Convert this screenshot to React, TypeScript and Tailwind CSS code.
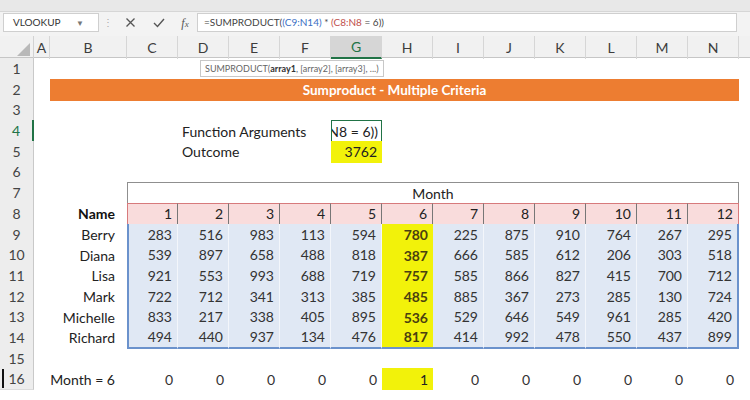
import React from 'react';

const COLS = ['A', 'B', 'C', 'D', 'E', 'F', 'G', 'H', 'I', 'J', 'K', 'L', 'M', 'N'];

const sales: [string, number[]][] = [
    ['Berry', [283, 516, 983, 113, 594, 780, 225, 875, 910, 764, 267, 295]],
    ['Diana', [539, 897, 658, 488, 818, 387, 666, 585, 612, 206, 303, 518]],
    ['Lisa', [921, 553, 993, 688, 719, 757, 585, 866, 827, 415, 700, 712]],
    ['Mark', [722, 712, 341, 313, 385, 485, 885, 367, 273, 285, 130, 724]],
    ['Michelle', [833, 217, 338, 405, 895, 536, 529, 646, 549, 961, 285, 420]],
    ['Richard', [494, 440, 937, 134, 476, 817, 414, 992, 478, 550, 437, 899]],
];

const months = Array.from({ length: 12 }, (_, i) => i + 1);
const pickedMonth = 6;

const gridCols = 'grid grid-cols-[34px_16px_77px_repeat(12,51px)]';

const RowNum = ({ n, active = false, cursor = false }: { n: number; active?: boolean; cursor?: boolean }) => (
    <div
        className={`relative h-full flex items-center justify-center bg-[#ededed] border-b border-[#dcdcdc] ${
            active ? 'text-[#217346] border-r-2 border-r-[#217346]' : 'text-[#444] border-r border-r-[#c9c9c9]'
        }`}
    >
        {cursor && <div className="absolute left-[2px] top-[1px] bottom-[1px] w-[2px] bg-[#111]"></div>}
        {n}
    </div>
);

const Cell = ({ children, className = '' }: { children?: React.ReactNode; className?: string }) => (
    <div className={`h-full flex items-center justify-end pr-[5px] overflow-hidden whitespace-nowrap ${className}`}>
        {children}
    </div>
);

const Row = ({ n, children, active, cursor }: { n: number; children?: React.ReactNode; active?: boolean; cursor?: boolean }) => (
    <div className={`${gridCols} h-[20.7px]`}>
        <RowNum n={n} active={active} cursor={cursor} />
        {children}
    </div>
);

export default function App() {
    return (
        <div className="w-[750px] h-[400px] bg-white overflow-hidden text-[14px] text-[#333]" style={{ fontFamily: 'Lato, "Open Sans", sans-serif' }}>
            {/* Formula bar */}
            <div className="h-[36px] bg-[#f3f3f3] flex flex-col">
                <div className="h-[12px] bg-[#e8e8e8] border-b border-[#d6d6d6]"></div>
                <div className="flex items-stretch h-[19px] mt-[1px] pr-[13px]">
                    <div className="w-[96px] ml-[3px] bg-white border border-[#cfcfcf] flex items-center justify-between px-[9px] text-[10px] text-[#333]">
                        <span>VLOOKUP</span>
                        <span className="text-[8px] text-[#777] mr-[5px]">▼</span>
                    </div>
                    <div className="w-[18px] flex items-center justify-center text-[10px] text-[#aaa]">⋮</div>
                    <div className="w-[80px] flex items-center justify-around text-[#555]">
                        <svg width="11" height="11" viewBox="0 0 11 11" fill="none" stroke="#555" strokeWidth="1.3">
                            <path d="M1.5 1.5l8 8M9.5 1.5l-8 8" />
                        </svg>
                        <svg width="12" height="11" viewBox="0 0 12 11" fill="none" stroke="#555" strokeWidth="1.4">
                            <path d="M1 6l3.5 3.5L11 2" />
                        </svg>
                        <span className="text-[12px] italic text-[#555]" style={{ fontFamily: '"Liberation Serif", serif' }}>
                            f<span className="text-[9px]">x</span>
                        </span>
                    </div>
                    <div className="flex-1 bg-white border border-[#cfcfcf] flex items-center pl-[6px] text-[10px] text-[#444]">
                        <span>=SUMPRODUCT(</span>
                        <span className="text-[#3b6fc4]">(C9:N14)</span>
                        <span className="whitespace-pre"> * </span>
                        <span className="text-[#c0504d]">(C8:N8</span>
                        <span className="whitespace-pre"> = 6))</span>
                    </div>
                </div>
            </div>

            {/* Column letters */}
            <div className={`${gridCols} h-[22px] bg-[#f1f1f1] border-b border-[#c6c6c6] text-[#3d3d3d]`}>
                <div className="relative border-r border-[#d2d2d2]">
                    <div className="absolute right-[3px] bottom-[3px] w-0 h-0 border-l-[13px] border-l-transparent border-b-[13px] border-b-[#b9b9b9]"></div>
                </div>
                {COLS.map((c) => (
                    <div
                        key={c}
                        className={`flex items-center justify-center border-r border-[#d6d6d6] ${
                            c === 'G' ? 'bg-[#d6d6d6] text-[#217346] border-b-2 border-b-[#217346]' : ''
                        }`}
                    >
                        {c}
                    </div>
                ))}
            </div>

            {/* Sheet body */}
            <div className="relative">
                <Row n={1} />
                <Row n={2}>
                    <div></div>
                    <div className="col-span-13 bg-[#ed7d31] text-white font-bold text-[13.5px] flex items-center justify-center">
                        Sumproduct - Multiple Criteria
                    </div>
                </Row>
                <Row n={3} />
                <Row n={4} active>
                    <div className="col-span-3"></div>
                    <div className="col-span-3 flex items-center pl-[4px] text-[#222]">Function Arguments</div>
                    <div className="border-[1.5px] border-[#217346] flex items-center justify-end overflow-hidden whitespace-nowrap pr-[3px] text-[#222]">
                        <span>N8 = 6))</span>
                    </div>
                </Row>
                <Row n={5}>
                    <div className="col-span-3"></div>
                    <div className="col-span-3 flex items-center pl-[4px] text-[#222]">Outcome</div>
                    <Cell className="bg-[#f2f20a] text-[#222]">3762</Cell>
                </Row>
                <Row n={6} />
                <Row n={7}>
                    <div className="col-span-2"></div>
                    <div className="col-span-12 border-t border-x border-[#8f8f8f] flex items-center justify-center text-[#222]">
                        Month
                    </div>
                </Row>
                <Row n={8}>
                    <div></div>
                    <Cell className="pr-[12px] font-bold text-[#111]">Name</Cell>
                    {months.map((m) => (
                        <Cell
                            key={m}
                            className={`bg-[#f9dcdc] border-y border-[#d77a7c] text-[#222] ${m === 1 ? 'border-l border-l-[#d77a7c]' : ''} ${
                                m === 12 ? 'border-r border-r-[#d77a7c]' : 'border-r border-r-[#777]'
                            }`}
                        >
                            {m}
                        </Cell>
                    ))}
                </Row>
                {sales.map(([name, vals], r) => (
                    <Row key={name} n={9 + r}>
                        <div></div>
                        <Cell className="pr-[12px] text-[#222]">{name}</Cell>
                        {vals.map((v, i) => {
                            const picked = i + 1 === pickedMonth;
                            const last = r === sales.length - 1;
                            return (
                                <Cell
                                    key={i}
                                    className={`${
                                        picked ? 'bg-[#f2f20a] text-[#4a4010] font-bold' : 'bg-[#e0e8f4] text-[#333]'
                                    } ${i === 0 ? 'border-l-2 border-l-[#6b92cc]' : ''} ${
                                        i === 11 ? 'border-r-2 border-r-[#6b92cc]' : picked ? '' : 'border-r border-r-[#f3f6fb]'
                                    } ${last ? 'border-b-2 border-b-[#6b92cc]' : picked ? '' : 'border-b border-b-[#cfd9ea]'}`}
                                >
                                    {v}
                                </Cell>
                            );
                        })}
                    </Row>
                ))}
                <Row n={15} />
                <Row n={16} cursor>
                    <div></div>
                    <Cell className="pr-[12px] text-[#222]">Month = 6</Cell>
                    {months.map((m) => (
                        <Cell key={m} className={m === pickedMonth ? 'bg-[#f2f20a] text-[#222]' : 'text-[#333]'}>
                            {m === pickedMonth ? 1 : 0}
                        </Cell>
                    ))}
                </Row>

                {/* Argument hint shown while editing the formula */}
                <div className="absolute left-[200px] top-[2px] h-[17px] px-[4px] bg-white border border-[#c8c8c8] flex items-center text-[9px] text-[#666] whitespace-nowrap">
                    SUMPRODUCT(<b className="text-[#333]">array1</b>, [array2], [array3], ...)
                </div>
            </div>
        </div>
    );
}
